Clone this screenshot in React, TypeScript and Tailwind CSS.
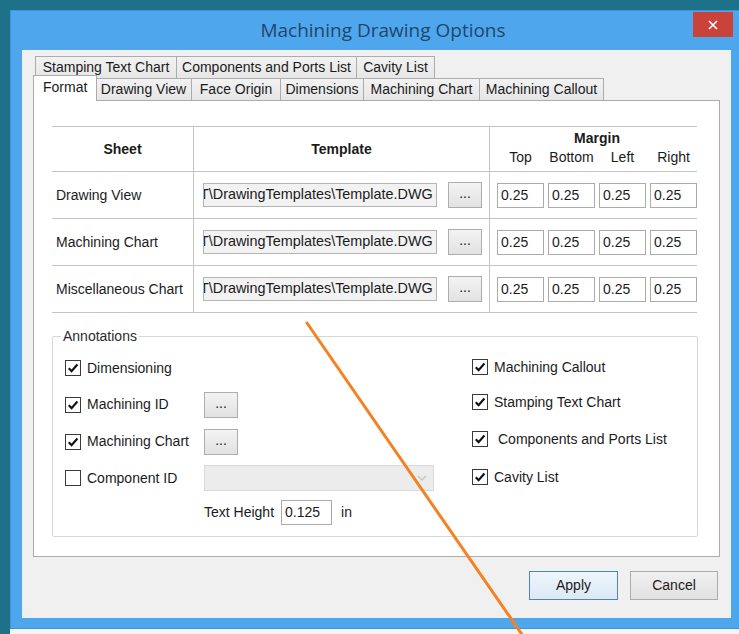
import { useState } from "react";

const body = { fontFamily: '"Liberation Sans", Arial, sans-serif' };

// one checkbox, WinForms look
function CheckBox({ checked }: { checked: boolean }) {
  return (
    <span className="w-[16px] h-[16px] shrink-0 flex items-center justify-center border border-[#3a3a3a] bg-white">
      {checked && (
        <svg width="12" height="12" viewBox="0 0 12 12">
          <path d="M1.8 6.2 L4.6 9.2 L10.4 2.6" stroke="#111" strokeWidth="2.2" fill="none" />
        </svg>
      )}
    </span>
  );
}

function DotsButton() {
  return (
    <button className="w-[34px] h-[26px] border border-[#adadad] bg-gradient-to-b from-[#f3f3f3] to-[#e2e2e2] text-[14px] leading-none text-[#222] pb-[4px]">
      ...
    </button>
  );
}

// read-only path box, scrolled so the start of the path is clipped
function TemplateBox() {
  return (
    <div className="w-[234px] h-[24px] border border-[#b4b4b4] bg-[#f2f2f2] overflow-hidden flex items-center whitespace-nowrap text-[14.4px] text-[#1b1b1b]">
      <span className="-ml-[4px]">T\DrawingTemplates\Template.DWG</span>
    </div>
  );
}

function NumBox({ value, w = 47 }: { value: string; w?: number }) {
  return (
    <div
      className={`${w === 47 ? "w-[47px]" : "w-[51px]"} h-[25px] border border-[#ababab] bg-white flex items-center pl-[3px] text-[14px] text-[#1b1b1b]`}
    >
      {value}
    </div>
  );
}

const sheets = ["Drawing View", "Machining Chart", "Miscellaneous Chart"];

const backTabs = [
  { label: "Stamping Text Chart", w: "w-[141px]" },
  { label: "Components and Ports List", w: "w-[180px]" },
  { label: "Cavity List", w: "w-[79px]" },
];

const frontTabs = [
  { label: "Drawing View", w: "w-[96px]" },
  { label: "Face Origin", w: "w-[89px]" },
  { label: "Dimensions", w: "w-[83px]" },
  { label: "Machining Chart", w: "w-[116px]" },
  { label: "Machining Callout", w: "w-[125px]" },
];

const leftChecks = [
  { label: "Dimensioning", checked: true, h: "h-[36px]", extra: null as null | "dots" | "combo" },
  { label: "Machining ID", checked: true, h: "h-[37px]", extra: "dots" as const },
  { label: "Machining Chart", checked: true, h: "h-[37px]", extra: "dots" as const },
  { label: "Component ID", checked: false, h: "h-[36px]", extra: "combo" as const },
];

const rightChecks = [
  { label: "Machining Callout", h: "h-[34px]", pad: "" },
  { label: "Stamping Text Chart", h: "h-[36px]", pad: "" },
  { label: "Components and Ports List", h: "h-[38px]", pad: "pl-[4px]" },
  { label: "Cavity List", h: "h-[38px]", pad: "" },
];

export default function App() {
  const [tab] = useState("Format");

  return (
    <div className="relative w-[739px] h-[634px] overflow-hidden bg-[#1d7189] pl-[10px] pt-[10px]" style={body}>
      {/* window frame */}
      <div className="w-[740px] h-[619px] flex flex-col bg-[#4ea7ec] border border-[#3f93d6]">
        <div className="relative h-[39px] shrink-0 flex items-center justify-center">
          <span
            className="text-[19px] text-[#23456b] ml-[6px]"
            style={{ fontFamily: '"Open Sans", "Noto Sans", sans-serif' }}
          >
            Machining Drawing Options
          </span>
          <button className="absolute top-[1px] left-[682px] w-[40px] h-[25px] bg-[#c9433b] flex items-center justify-center">
            <svg width="10" height="10" viewBox="0 0 10 10">
              <path d="M1 1 L9 9 M9 1 L1 9" stroke="#fff" strokeWidth="1.6" />
            </svg>
          </button>
        </div>

        {/* client area */}
        <div className="ml-[11px] w-[709px] h-[568px] bg-[#f0f0f0] flex flex-col pt-[6px]">
          <div className="ml-[11px] w-[687px] flex flex-col text-[14px] text-[#1b1b1b]">
            {/* back row of tabs */}
            <div className="flex pl-[2px] h-[22px]">
              {backTabs.map((t, i) => (
                <div
                  key={t.label}
                  className={`${t.w} h-[22px] flex items-center justify-center border-t border-l border-[#acacac] bg-gradient-to-b from-[#f2f2f2] to-[#e6e6e6] ${i === backTabs.length - 1 ? "border-r" : ""}`}
                >
                  {t.label}
                </div>
              ))}
            </div>
            {/* front row of tabs */}
            <div className="flex items-end pl-[2px] h-[22px]">
              <div className="relative z-10 -ml-[2px] -mr-[2px] -mb-px w-[64px] h-[26px] flex items-center pl-[9px] pb-[2px] border-t border-l border-r border-[#acacac] bg-white">
                {tab}
              </div>
              {frontTabs.map((t, i) => (
                <div
                  key={t.label}
                  className={`${t.w} h-[22px] flex items-center justify-center border-t border-l border-[#acacac] bg-gradient-to-b from-[#f2f2f2] to-[#e6e6e6] ${i === frontTabs.length - 1 ? "border-r" : ""}`}
                >
                  {t.label}
                </div>
              ))}
            </div>

            {/* tab page */}
            <div className="h-[457px] border border-[#acacac] bg-white pl-[18px] pt-[25px]">
              {/* sheet / template / margin table */}
              <div className="w-[645px] flex flex-col border-b border-[#c4c4c4]">
                <div className="flex h-[45px] border-t border-[#c4c4c4]">
                  <div className="w-[141px] flex items-center justify-center font-bold">Sheet</div>
                  <div className="w-[296px] flex items-center justify-center font-bold border-l border-[#c4c4c4]">
                    Template
                  </div>
                  <div className="w-[208px] flex flex-col border-l border-[#c4c4c4] pl-[7px] pt-[3px]">
                    <div className="text-center font-bold leading-[16px]">Margin</div>
                    <div className="grid grid-cols-[47px_47px_47px_47px] gap-x-[4px] mt-[3px] leading-[16px]">
                      <span className="text-center">Top</span>
                      <span className="text-center">Bottom</span>
                      <span className="text-center">Left</span>
                      <span className="text-center">Right</span>
                    </div>
                  </div>
                </div>
                {sheets.map((s) => (
                  <div key={s} className="flex h-[47px] border-t border-[#c4c4c4]">
                    <div className="w-[141px] flex items-center pl-[4px]">{s}</div>
                    <div className="w-[296px] flex items-center pl-[9px] gap-[11px] border-l border-[#c4c4c4]">
                      <TemplateBox />
                      <DotsButton />
                    </div>
                    <div className="w-[208px] flex items-center gap-[4px] pl-[7px] border-l border-[#c4c4c4]">
                      <NumBox value="0.25" />
                      <NumBox value="0.25" />
                      <NumBox value="0.25" />
                      <NumBox value="0.25" />
                    </div>
                  </div>
                ))}
              </div>

              {/* annotations group */}
              <div className="relative mt-[23px] w-[646px] h-[201px] border border-[#d6d6d6] rounded-[2px] flex pl-[12px] pt-[13px]">
                <span className="absolute -top-[9px] left-[8px] bg-white px-[2px] leading-[16px] text-[#2b2b2b]">
                  Annotations
                </span>

                <div className="w-[407px] flex flex-col">
                  {leftChecks.map((c) => (
                    <div key={c.label} className={`${c.h} flex items-center`}>
                      <div className="w-[139px] flex items-center gap-[6px]">
                        <CheckBox checked={c.checked} />
                        <span>{c.label}</span>
                      </div>
                      {c.extra === "dots" && <DotsButton />}
                      {c.extra === "combo" && (
                        <div className="w-[230px] h-[26px] border border-[#d9d9d9] bg-[#ececec] flex items-center justify-end pr-[6px]">
                          <svg width="10" height="6" viewBox="0 0 10 6">
                            <path d="M1 1 L5 5 L9 1" stroke="#c4c4c4" strokeWidth="1.3" fill="none" />
                          </svg>
                        </div>
                      )}
                    </div>
                  ))}
                  <div className="h-[32px] flex items-center pl-[139px]">
                    <span>Text Height</span>
                    <div className="ml-[7px]">
                      <NumBox value="0.125" w={51} />
                    </div>
                    <span className="ml-[9px]">in</span>
                  </div>
                </div>

                <div className="flex flex-col">
                  {rightChecks.map((c) => (
                    <div key={c.label} className={`${c.h} flex items-center gap-[6px]`}>
                      <CheckBox checked />
                      <span className={c.pad}>{c.label}</span>
                    </div>
                  ))}
                </div>
              </div>
            </div>
          </div>

          {/* dialog buttons */}
          <div className="mt-[14px] flex justify-end gap-[12px] pr-[13px] text-[14px] text-[#1b1b1b]">
            <button className="w-[89px] h-[29px] border border-[#4f86b8] bg-gradient-to-b from-[#eef5fb] to-[#dce9f5]">
              Apply
            </button>
            <button className="w-[88px] h-[29px] border border-[#acacac] bg-gradient-to-b from-[#f0f0f0] to-[#e1e1e1]">
              Cancel
            </button>
          </div>
        </div>
      </div>
      <div className="h-[5px] bg-[#f4f4f4]" />

      {/* pointer drawn across the dialog */}
      <svg className="absolute left-0 top-0 pointer-events-none" width="739" height="634" viewBox="0 0 739 634">
        <line x1="307" y1="323" x2="523" y2="636" stroke="#f58220" strokeWidth="3" strokeLinecap="round" />
      </svg>
    </div>
  );
}
